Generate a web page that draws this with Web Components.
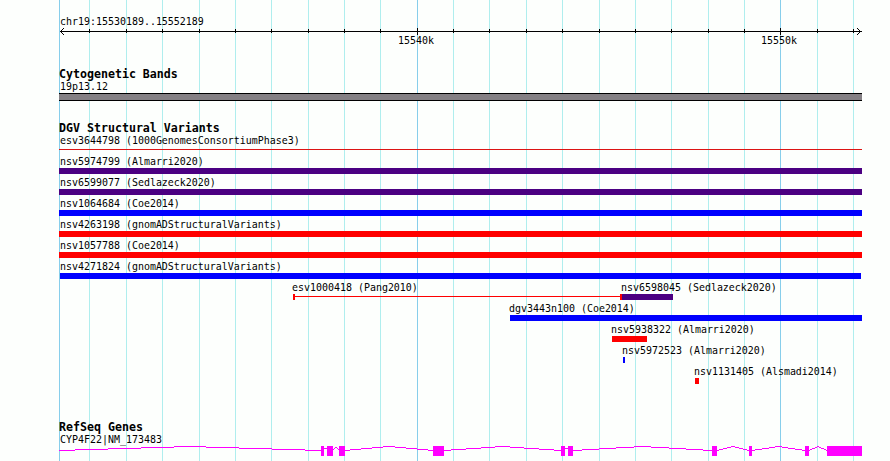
<!DOCTYPE html>
<html lang="en">
<head>
<meta charset="utf-8">
<title>chr19:15530189..15552189</title>
<style>
html,body{margin:0;background:#fdfffd;overflow:hidden}
body{width:890px;height:461px}
</style>
</head>
<body>
<genome-browser></genome-browser>
<script>
const MONO = '"DejaVu Sans Mono","Liberation Mono",monospace';

class GridLines extends HTMLElement {
  connectedCallback() {
    const minor = [89,126,162,199,235,271,308,344,380,453,489,526,562,599,635,671,708,744,817,853];
    const major = [59,417,780];
    const bars = (xs, c) => `<path fill="${c}" d="${xs.map(x => `M${x} 0h1v461h-1z`).join('')}"/>`;
    this.attachShadow({mode:'open'}).innerHTML =
      `<style>:host{display:block;position:absolute;inset:0}svg{display:block}</style>
       <svg width="890" height="461" shape-rendering="crispEdges">${bars(minor,'#afeeee')}${bars(major,'#87ceeb')}</svg>`;
  }
}
customElements.define('grid-lines', GridLines);

class ScaleRuler extends HTMLElement {
  connectedCallback() {
    const minor = [89,126,162,199,235,271,308,344,380,453,489,526,562,599,635,671,708,744,817,853];
    let d = 'M60 31h802v1h-802z';
    minor.forEach(x => d += `M${x} 29h1v4h-1z`);
    [417,780].forEach(x => d += `M${x} 28h1v7h-1z`);
    for (let i = 1; i < 4; i++) {
      d += `M${60+i} ${31-i}h1v1h-1zM${60+i} ${31+i}h1v1h-1z`;
      d += `M${860-i} ${31-i}h1v1h-1zM${860-i} ${31+i}h1v1h-1z`;
    }
    this.attachShadow({mode:'open'}).innerHTML =
      `<style>:host{display:block;height:67px}svg{display:block}text{font:9.967px ${MONO};shape-rendering:auto}</style>
       <svg width="890" height="67" shape-rendering="crispEdges"><path d="${d}"/>
       <text x="60" y="25">${this.getAttribute('region')}</text>
       <text x="398" y="44">15540k</text><text x="761" y="44">15550k</text></svg>`;
  }
}
customElements.define('scale-ruler', ScaleRuler);

class BrowserTrack extends HTMLElement {
  connectedCallback() {
    this.attachShadow({mode:'open'}).innerHTML =
      `<style>:host{display:block}
       h2{margin:0;padding-left:59px;height:14px;font:bold 11.627px/14px ${MONO};white-space:pre}</style>
       <h2>${this.getAttribute('name')}</h2><slot></slot>`;
  }
}
customElements.define('browser-track', BrowserTrack);

class TrackRow extends HTMLElement {
  connectedCallback() {
    this.attachShadow({mode:'open'}).innerHTML =
      `<style>:host{display:grid;height:21px}::slotted(*){grid-area:1/1}</style><slot></slot>`;
  }
}
customElements.define('track-row', TrackRow);

class GenomeFeature extends HTMLElement {
  connectedCallback() {
    const a = +this.getAttribute('start'), b = +this.getAttribute('end');
    const lx = +(this.getAttribute('label-x') || 60), c = this.getAttribute('color');
    const kind = this.getAttribute('kind');
    const w = b - a;
    let h = 6, shapes;
    if (kind === 'line') shapes = `<path fill="${c}" d="M0 2h${w}v1h${-w}z"/>`;
    else if (kind === 'span') shapes = `<path fill="${c}" d="M0 0h2v6h-2zM${w-2} 0h2v6h-2zM0 2h${w}v1h${-w}z"/>`;
    else if (kind === 'band') { h = 8; shapes = `<path d="M0 0h${w}v8h${-w}z"/><path fill="#848084" d="M0 1h${w}v6h${-w}z"/>`; }
    else shapes = `<path fill="${c}" d="M0 0h${w}v6h${-w}z"/>`;
    this.attachShadow({mode:'open'}).innerHTML =
      `<style>:host{display:block}
       .label{height:12px;padding-left:${lx}px;font:9.967px/12px ${MONO};white-space:pre}
       svg{display:block;margin-left:${a}px}</style>
       <div class="label"><slot></slot></div>
       <svg width="${w}" height="${h}" shape-rendering="crispEdges">${shapes}</svg>`;
  }
}
customElements.define('genome-feature', GenomeFeature);

class GeneModel extends HTMLElement {
  connectedCallback() {
    const exons = [[321,324],[327,333],[339,345],[433,444],[561,565],[568,573],[712,717],[749,752],[805,809],[827,862]];
    let d = exons.map(([a,b]) => `M${a} 0h${b-a}v10h${a-b}z`).join('');
    let from = 59;
    for (const [a,b] of exons) {
      if (a - from < 5) d += `M${from} 2h${a-from}v1h${from-a}z`;
      else {
        // peaked intron: one-pixel steps rising four rows to the midpoint
        const half = (a - from) / 2;
        for (let x = from; x < a; x++) {
          const t = 1 - Math.abs(x + .5 - from - half) / half;
          d += `M${x} ${4 - Math.round(t * 4)}h1v1h-1z`;
        }
      }
      from = b;
    }
    this.attachShadow({mode:'open'}).innerHTML =
      `<style>:host{display:block}.label{height:12px;padding-left:60px;font:9.967px/12px ${MONO};white-space:pre}svg{display:block}</style>
       <div class="label"><slot></slot></div>
       <svg width="890" height="10" shape-rendering="crispEdges"><path fill="#f0f" d="${d}"/></svg>`;
  }
}
customElements.define('gene-model', GeneModel);

class GenomeBrowser extends HTMLElement {
  connectedCallback() {
    const wide = (n, c, a = 59, b = 862, k = '') =>
      `<track-row><genome-feature kind="${k}" start="${a}" end="${b}" color="${c}">${n}</genome-feature></track-row>`;
    const at = (n, c, lx, a, b, k = '') =>
      `<genome-feature kind="${k}" label-x="${lx}" start="${a}" end="${b}" color="${c}">${n}</genome-feature>`;
    const row = s => `<track-row>${s}</track-row>`;
    this.attachShadow({mode:'open'}).innerHTML =
      `<style>:host{display:block;position:relative;width:890px;height:461px;overflow:hidden;color:#000}
       main{position:relative;display:flex;flex-direction:column}
       .bands{height:54px}.variants{height:299px}</style>
      <grid-lines></grid-lines>
      <main>
        <scale-ruler region="chr19:15530189..15552189"></scale-ruler>
        <browser-track class="bands" name="Cytogenetic Bands">
          <genome-feature kind="band" start="59" end="862">19p13.12</genome-feature>
        </browser-track>
        <browser-track class="variants" name="DGV Structural Variants">
          ${wide('esv3644798 (1000GenomesConsortiumPhase3)', '#dc1414', 59, 862, 'line')}
          ${wide('nsv5974799 (Almarri2020)', '#4b0082')}
          ${wide('nsv6599077 (Sedlazeck2020)', '#4b0082')}
          ${wide('nsv1064684 (Coe2014)', '#00f')}
          ${wide('nsv4263198 (gnomADStructuralVariants)', '#f00')}
          ${wide('nsv1057788 (Coe2014)', '#f00')}
          ${wide('nsv4271824 (gnomADStructuralVariants)', '#00f', 60, 861)}
          ${row(at('esv1000418 (Pang2010)', '#f00', 292, 293, 622, 'span') + at('nsv6598045 (Sedlazeck2020)', '#4b0082', 621, 622, 673))}
          ${row(at('dgv3443n100 (Coe2014)', '#00f', 509, 510, 862))}
          ${row(at('nsv5938322 (Almarri2020)', '#f00', 611, 612, 647))}
          ${row(at('nsv5972523 (Almarri2020)', '#00f', 622, 623, 625))}
          ${row(at('nsv1131405 (Alsmadi2014)', '#f00', 694, 695, 699))}
        </browser-track>
        <browser-track name="RefSeq Genes"><gene-model>CYP4F22|NM_173483</gene-model></browser-track>
      </main>`;
  }
}
customElements.define('genome-browser', GenomeBrowser);
</script>
</body>
</html>
